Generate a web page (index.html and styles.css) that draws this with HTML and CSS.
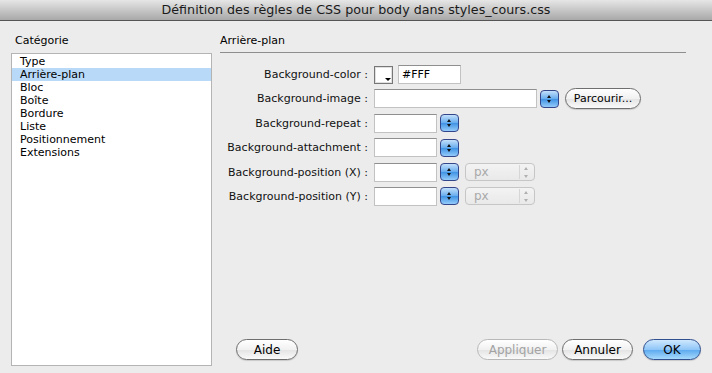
FILE: index.html
```html
<!DOCTYPE html>
<html lang="fr">
<head>
    <meta charset="UTF-8">
    <title>Définition des règles de CSS</title>
    <link rel="stylesheet" href="styles.css">
</head>
<body>

<div class="dialog">
    <div class="titlebar">Définition des règles de CSS pour body dans styles_cours.css</div>

    <div class="main">
        <div class="left">
            <div class="cat-label">Catégorie</div>
            <ul class="list">
                <li>Type</li>
                <li class="selected">Arrière-plan</li>
                <li>Bloc</li>
                <li>Boîte</li>
                <li>Bordure</li>
                <li>Liste</li>
                <li>Positionnement</li>
                <li>Extensions</li>
            </ul>
        </div>

        <div class="right">
            <div class="section-title">Arrière-plan</div>

            <div class="form">
                <div class="row">
                    <label>Background-color :</label>
                    <span class="swatch"><span class="swatch-arrow"></span></span>
                    <span class="input input-color">#FFF</span>
                </div>
                <div class="row">
                    <label>Background-image :</label>
                    <span class="input input-wide"></span>
                    <span class="stepper"></span>
                    <button class="btn btn-small">Parcourir...</button>
                </div>
                <div class="row">
                    <label>Background-repeat :</label>
                    <span class="input"></span>
                    <span class="stepper"></span>
                </div>
                <div class="row">
                    <label>Background-attachment :</label>
                    <span class="input"></span>
                    <span class="stepper"></span>
                </div>
                <div class="row">
                    <label>Background-position (X) :</label>
                    <span class="input"></span>
                    <span class="stepper"></span>
                    <span class="unit">px<span class="unit-arrows"></span></span>
                </div>
                <div class="row">
                    <label>Background-position (Y) :</label>
                    <span class="input"></span>
                    <span class="stepper"></span>
                    <span class="unit">px<span class="unit-arrows"></span></span>
                </div>
            </div>

            <div class="buttons">
                <button class="btn btn-help">Aide</button>
                <div class="spacer"></div>
                <button class="btn btn-apply" disabled>Appliquer</button>
                <button class="btn btn-cancel">Annuler</button>
                <button class="btn btn-ok">OK</button>
            </div>
        </div>
    </div>
</div>

</body>
</html>
```

FILE: styles.css
```css
* {
    margin: 0;
    padding: 0;
    box-sizing: border-box;
}
body {
    font-family: 'DejaVu Sans', sans-serif;
    font-size: 11px;
    color: #000;
    background: #ececec;
}
.dialog {
    width: 712px;
    height: 373px;
    display: flex;
    flex-direction: column;
    background: #ececec;
}
.titlebar {
    height: 21px;
    line-height: 20px;
    text-align: center;
    font-size: 12.7px;
    color: #1a1a1a;
    background: linear-gradient(#e6e6e6, #a8a8a8);
    border-bottom: 1px solid #555;
}
.main {
    flex: 1;
    display: flex;
    padding-left: 11px;
}
.left {
    width: 201px;
    display: flex;
    flex-direction: column;
    padding-top: 13px;
    padding-bottom: 7px;
}
.cat-label {
    height: 19px;
    padding-left: 4px;
}
.list {
    flex: 1;
    list-style: none;
    background: #fff;
    border: 1px solid #b4b4b4;
    padding-top: 1px;
}
.list li {
    height: 13px;
    line-height: 13px;
    padding-left: 8px;
}
.list .selected {
    background: #b9d9f9;
}
.right {
    flex: 1;
    display: flex;
    flex-direction: column;
    margin-left: 8px;
    padding-right: 11px;
}
.section-title {
    padding-top: 13px;
    height: 32px;
    margin-right: 15px;
    border-bottom: 1px solid #8e8e8e;
}
.form {
    display: flex;
    flex-direction: column;
    gap: 5.4px;
    margin-top: 12px;
}
.row {
    display: flex;
    align-items: center;
    height: 19px;
}
.row label {
    width: 148px;
    text-align: right;
    margin-right: 6px;
    color: #111;
}
.input {
    width: 63px;
    height: 19px;
    background: #fff;
    border: 1px solid #c2c2c2;
    border-top-color: #8f8f8f;
    line-height: 17px;
    padding-left: 3px;
}
.input-wide {
    width: 163px;
}
.input-color {
    width: 63px;
    margin-left: 5px;
}
.swatch {
    position: relative;
    width: 19px;
    height: 18px;
    background: #fff;
    border: 1px solid #777;
    box-shadow: inset 0 0 0 1px #e0e0e0;
}
.swatch-arrow {
    position: absolute;
    right: 1px;
    bottom: 2px;
    border-left: 3px solid transparent;
    border-right: 3px solid transparent;
    border-top: 3px solid #000;
}
.stepper {
    position: relative;
    width: 19px;
    height: 18px;
    margin-left: 3px;
    border: 1px solid #34468a;
    border-radius: 4px;
    background: linear-gradient(#c4e0fb, #64abee 50%, #3f92e4 51%, #94cbfa);
}
.stepper::before,
.stepper::after {
    content: "";
    position: absolute;
    left: 6px;
    border-left: 2.5px solid transparent;
    border-right: 2.5px solid transparent;
}
.stepper::before {
    top: 4px;
    border-bottom: 3px solid #111;
}
.stepper::after {
    bottom: 4px;
    border-top: 3px solid #111;
}
.unit {
    position: relative;
    width: 70px;
    height: 18px;
    margin-left: 6px;
    border: 1px solid #c6c6c6;
    border-radius: 4px;
    background: linear-gradient(#f3f3f3, #e9e9e9);
    color: #a9a9a9;
    font-size: 12px;
    line-height: 16px;
    padding-left: 8px;
}
.unit-arrows {
    position: absolute;
    top: 1px;
    right: 0;
    width: 15px;
    height: 14px;
    border-left: 1px solid #d6d6d6;
}
.unit-arrows::before,
.unit-arrows::after {
    content: "";
    position: absolute;
    left: 4px;
    border-left: 2.5px solid transparent;
    border-right: 2.5px solid transparent;
}
.unit-arrows::before {
    top: 2px;
    border-bottom: 3px solid #b0b0b0;
}
.unit-arrows::after {
    bottom: 1px;
    border-top: 3px solid #b0b0b0;
}
.btn {
    height: 21px;
    font-family: 'DejaVu Sans', sans-serif;
    font-size: 12px;
    color: #000;
    border: 1px solid #6e6e6e;
    border-radius: 11px;
    background: linear-gradient(#ffffff, #f1f1f1 50%, #e3e3e3 51%, #fafafa);
    box-shadow: 0 1px 1px rgba(0, 0, 0, 0.15);
}
.btn-small {
    width: 76px;
    height: 21px;
    margin-left: 6px;
    font-size: 11px;
}
.buttons {
    display: flex;
    align-items: center;
    margin-top: auto;
    margin-bottom: 13px;
    padding-left: 16px;
}
.spacer {
    flex: 1;
}
.btn-help {
    width: 62px;
}
.btn-apply {
    width: 81px;
    color: #a3a3a3;
    border-color: #b8b8b8;
    box-shadow: none;
}
.btn-cancel {
    width: 71px;
    margin-left: 4px;
}
.btn-ok {
    width: 58px;
    margin-left: 10px;
    border-color: #2f4f8f;
    background: linear-gradient(#cfe8fd, #8fc6f7 50%, #5aa8ee 51%, #a7dafc);
}
```
